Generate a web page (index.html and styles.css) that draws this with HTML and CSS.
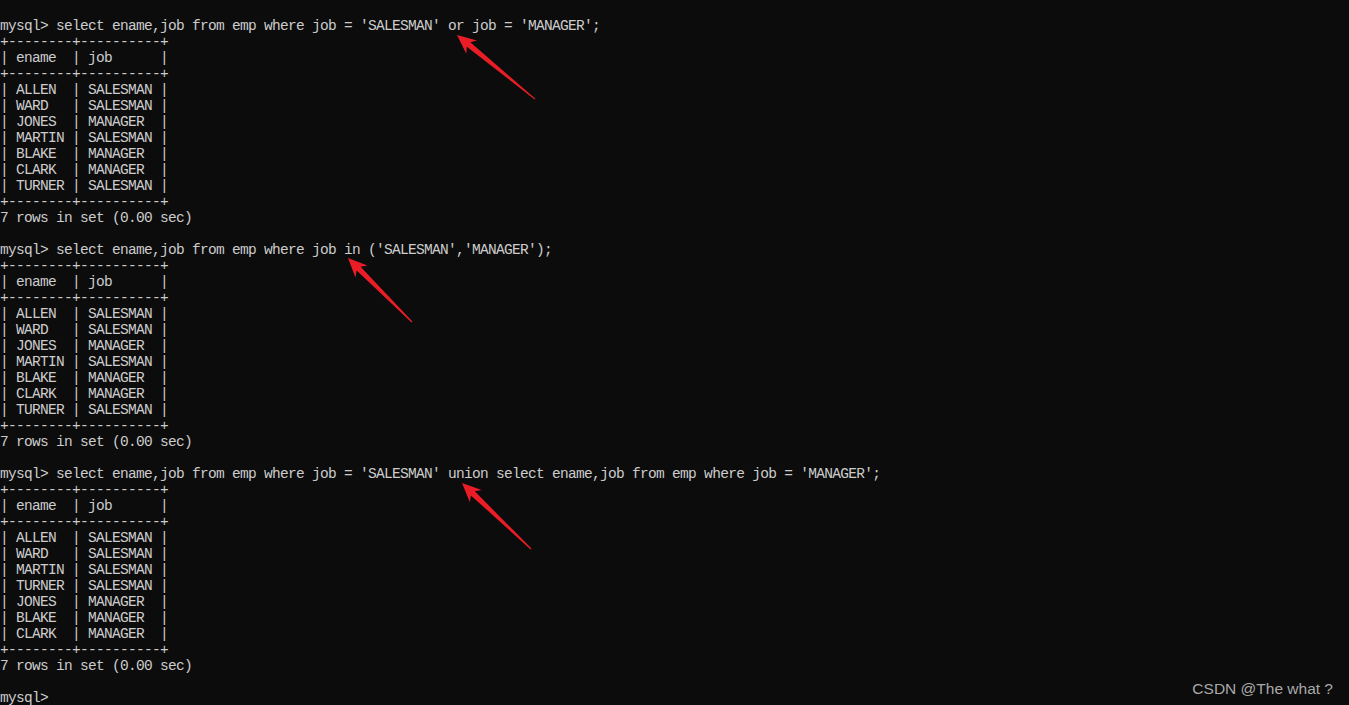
FILE: index.html
```html
<!DOCTYPE html>
<html lang="en">
<head>
<meta charset="utf-8">
<title>mysql console</title>
<link rel="stylesheet" href="styles.css">
</head>
<body>
<main class="console">
<pre class="output">mysql> select ename,job from emp where job = 'SALESMAN' or job = 'MANAGER';
+--------+----------+
| ename  | job      |
+--------+----------+
| ALLEN  | SALESMAN |
| WARD   | SALESMAN |
| JONES  | MANAGER  |
| MARTIN | SALESMAN |
| BLAKE  | MANAGER  |
| CLARK  | MANAGER  |
| TURNER | SALESMAN |
+--------+----------+
7 rows in set (0.00 sec)

mysql> select ename,job from emp where job in ('SALESMAN','MANAGER');
+--------+----------+
| ename  | job      |
+--------+----------+
| ALLEN  | SALESMAN |
| WARD   | SALESMAN |
| JONES  | MANAGER  |
| MARTIN | SALESMAN |
| BLAKE  | MANAGER  |
| CLARK  | MANAGER  |
| TURNER | SALESMAN |
+--------+----------+
7 rows in set (0.00 sec)

mysql> select ename,job from emp where job = 'SALESMAN' union select ename,job from emp where job = 'MANAGER';
+--------+----------+
| ename  | job      |
+--------+----------+
| ALLEN  | SALESMAN |
| WARD   | SALESMAN |
| MARTIN | SALESMAN |
| TURNER | SALESMAN |
| JONES  | MANAGER  |
| BLAKE  | MANAGER  |
| CLARK  | MANAGER  |
+--------+----------+
7 rows in set (0.00 sec)

mysql></pre>
<svg class="arrows" width="1349" height="705" viewBox="0 0 1349 705" aria-hidden="true">
  <g fill="#ea1d27">
    <polygon transform="translate(457 35) rotate(39.4)" points="0,0 19,-8.5 15,-2.8 101,-0.6 101,0.6 15,2.8 19,8.5"/>
    <polygon transform="translate(348 258) rotate(45)" points="0,0 19,-8.5 15,-2.8 90.5,-0.6 90.5,0.6 15,2.8 19,8.5"/>
    <polygon transform="translate(462 483) rotate(43.7)" points="0,0 19,-8.5 15,-2.8 95.5,-0.6 95.5,0.6 15,2.8 19,8.5"/>
  </g>
</svg>
<div class="watermark">CSDN @The what ?</div>
</main>
</body>
</html>
```

FILE: styles.css
```css
html, body {
  margin: 0;
  padding: 0;
  background: #0c0c0c;
}

.console {
  position: relative;
  width: 1349px;
  height: 705px;
  overflow: hidden;
  background: #0c0c0c;
}

.output {
  margin: 0;
  padding: 18px 0 0 0;
  font-family: "Liberation Mono", "DejaVu Sans Mono", monospace;
  font-size: 14.5px;
  letter-spacing: -0.7px;
  line-height: 16px;
  color: #cccccc;
  white-space: pre;
}

.arrows {
  position: absolute;
  left: 0;
  top: 0;
  pointer-events: none;
}

.watermark {
  position: absolute;
  right: 16px;
  bottom: 7px;
  font-family: "Liberation Sans", Arial, sans-serif;
  font-size: 15.5px;
  line-height: 18px;
  color: #a9a9a9;
}
```
